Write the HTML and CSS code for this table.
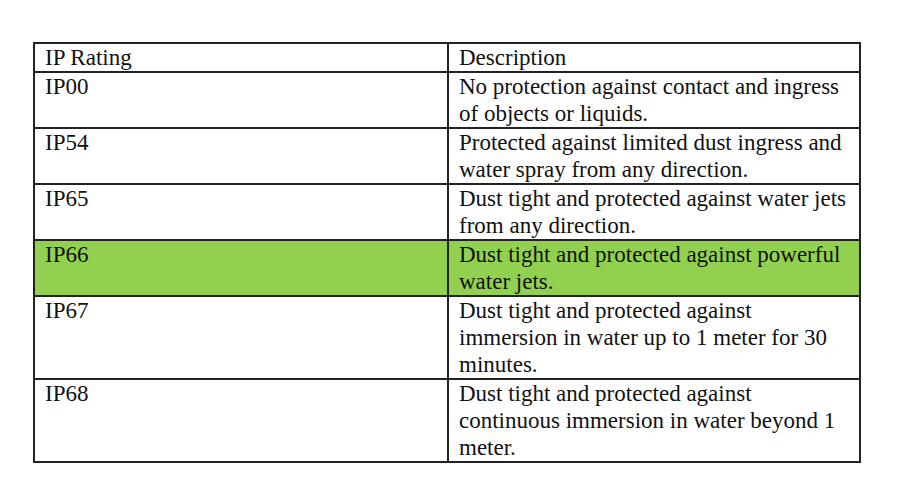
FILE: index.html
```html
<!DOCTYPE html>
<html>
<head>
<meta charset="utf-8">
<link rel="stylesheet" href="styles.css">
</head>
<body>
<table class="ip-table">
  <tr><td class="c1">IP Rating</td><td class="c2">Description</td></tr>
  <tr><td class="c1">IP00</td><td class="c2">No protection against contact and ingress of objects or liquids.</td></tr>
  <tr><td class="c1">IP54</td><td class="c2">Protected against limited dust ingress and water spray from any direction.</td></tr>
  <tr><td class="c1">IP65</td><td class="c2">Dust tight and protected against water jets from any direction.</td></tr>
  <tr class="hl"><td class="c1">IP66</td><td class="c2">Dust tight and protected against powerful water jets.</td></tr>
  <tr><td class="c1">IP67</td><td class="c2">Dust tight and protected against immersion in water up to 1 meter for 30 minutes.</td></tr>
  <tr><td class="c1">IP68</td><td class="c2">Dust tight and protected against continuous immersion in water beyond 1 meter.</td></tr>
</table>
</body>
</html>
```
FILE: styles.css
```css
html, body {
  margin: 0;
  padding: 0;
  background: #ffffff;
}
body {
  padding: 42px 0 0 33px;
  font-family: "Liberation Serif", "Times New Roman", serif;
  color: #111111;
}
.ip-table {
  border-collapse: collapse;
  width: 828px;
  table-layout: fixed;
  font-size: 23px;
  line-height: 27px;
}
.ip-table td {
  border: 2px solid #222222;
  padding: 0 7px 0 10px;
  vertical-align: top;
}
.ip-table .c1 { width: 395px; }
.ip-table .hl td { background: #92d050; }
```
